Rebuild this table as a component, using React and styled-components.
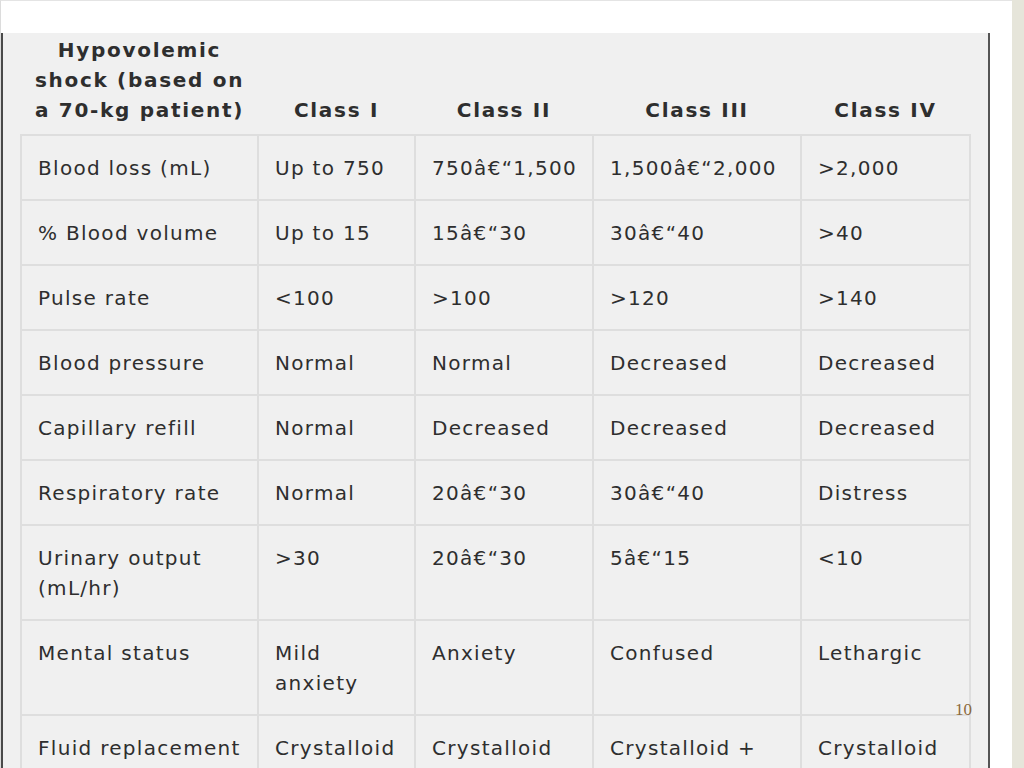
import React from "react";
import styled, { createGlobalStyle } from "styled-components";

const GlobalStyle = createGlobalStyle`
	html, body {
		margin: 0;
		padding: 0;
		background: #fff;
		overflow: hidden;
	}
`;

const Page = styled.div`
	width: 1024px;
	height: 768px;
	display: flex;
	position: relative;
	overflow: hidden;
	background: #e6e5da;
`;

const Slide = styled.div`
	box-sizing: border-box;
	width: 1012px;
	height: 768px;
	background: #fff;
	border-top: 1px solid #e4e4e4;
	border-left: 1px solid #dcdcdc;
	padding-top: 32px;
`;

// the table picture pasted on the slide
const Figure = styled.div`
	box-sizing: border-box;
	width: 989px;
	height: 100%;
	background: #f0f0f0;
	border-left: 2px solid #4a4a4a;
	border-right: 2px solid #555;
	padding-left: 17px;
`;

const Table = styled.table`
	border-collapse: collapse;
	table-layout: fixed;
	width: 949px;
	font-family: "DejaVu Sans", Verdana, sans-serif;
	font-size: 20px;
	line-height: 30px;
	color: #2e2e2e;
`;

const Head = styled.th`
	font-weight: bold;
	text-align: center;
	vertical-align: bottom;
	letter-spacing: 1.7px;
	padding: 2px 4px 9px;
	color: #2e2e2e;
`;

const Cell = styled.td`
	vertical-align: top;
	text-align: left;
	letter-spacing: 1.3px;
	padding: 17px 12px 16px 16px;
	border: 2px solid #dedede;
`;

const PageNumber = styled.span`
	position: absolute;
	left: 955px;
	top: 700px;
	font-family: "Liberation Serif", "Times New Roman", serif;
	font-size: 17px;
	color: #8c6a3c;
`;

const D = "â€\u201C";

const rows = [
	["Blood loss (mL)", "Up to 750", `750${D}1,500`, `1,500${D}2,000`, ">2,000"],
	["% Blood volume", "Up to 15", `15${D}30`, `30${D}40`, ">40"],
	["Pulse rate", "<100", ">100", ">120", ">140"],
	["Blood pressure", "Normal", "Normal", "Decreased", "Decreased"],
	["Capillary refill", "Normal", "Decreased", "Decreased", "Decreased"],
	["Respiratory rate", "Normal", `20${D}30`, `30${D}40`, "Distress"],
	["Urinary output (mL/hr)", ">30", `20${D}30`, `5${D}15`, "<10"],
	["Mental status", "Mild anxiety", "Anxiety", "Confused", "Lethargic"],
	["Fluid replacement", "Crystalloid", "Crystalloid", "Crystalloid +", "Crystalloid"],
];

const widths = [237, 157, 178, 208, 169];

export default function App() {
	return (
		<Page>
			<GlobalStyle />
			<Slide>
				<Figure>
					<Table>
						<colgroup>
							{widths.map((w, i) => (
								<col key={i} style={{ width: w }} />
							))}
						</colgroup>
						<thead>
							<tr>
								<Head>
									Hypovolemic shock (based on a 70-kg patient)
								</Head>
								<Head>Class I</Head>
								<Head>Class II</Head>
								<Head>Class III</Head>
								<Head>Class IV</Head>
							</tr>
						</thead>
						<tbody>
							{rows.map((row) => (
								<tr key={row[0]}>
									{row.map((c, i) => (
										<Cell key={i}>{c}</Cell>
									))}
								</tr>
							))}
						</tbody>
					</Table>
				</Figure>
			</Slide>
			<PageNumber>10</PageNumber>
		</Page>
	);
}
